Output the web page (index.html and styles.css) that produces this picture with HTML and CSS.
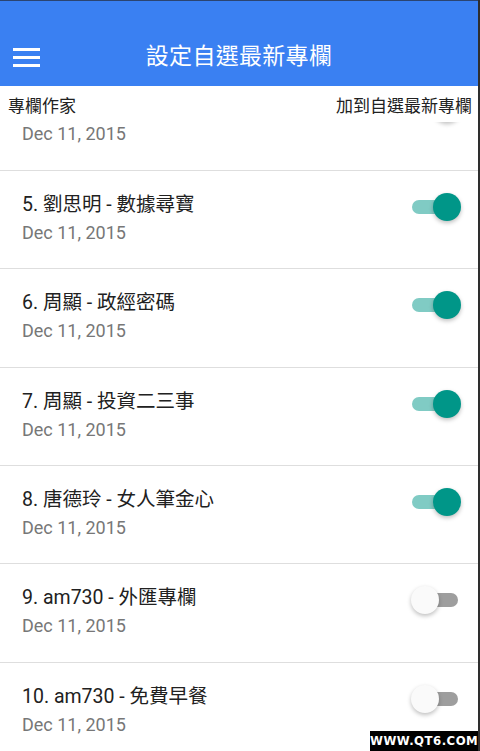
FILE: index.html
```html
<!DOCTYPE html>
<html>
<head>
  <meta charset="UTF-8">
  <meta name="viewport" content="width=device-width, initial-scale=1.0">
  <title>設定自選最新專欄</title>
  <link rel="stylesheet" href="styles.css">
</head>
<body>
  <div class="screen">
    <div class="appbar">
      <div class="menu">
        <span></span><span></span><span></span>
      </div>
      <h1>設定自選最新專欄</h1>
    </div>

    <div class="content">
      <div class="labels">
        <span>專欄作家</span>
        <span>加到自選最新專欄</span>
      </div>

      <div class="list">
        <!-- row 4 is scrolled up under the labels, only its date shows -->
        <div class="row">
          <div class="text">
            <div class="name-space"></div>
            <div class="date">Dec 11, 2015</div>
          </div>
          <div class="switch on"><div class="track"></div><div class="thumb"></div></div>
        </div>
        <div class="row">
          <div class="text">
            <div class="name">5. 劉思明 - 數據尋寶</div>
            <div class="date">Dec 11, 2015</div>
          </div>
          <div class="switch on"><div class="track"></div><div class="thumb"></div></div>
        </div>
        <div class="row">
          <div class="text">
            <div class="name">6. 周顯 - 政經密碼</div>
            <div class="date">Dec 11, 2015</div>
          </div>
          <div class="switch on"><div class="track"></div><div class="thumb"></div></div>
        </div>
        <div class="row">
          <div class="text">
            <div class="name">7. 周顯 - 投資二三事</div>
            <div class="date">Dec 11, 2015</div>
          </div>
          <div class="switch on"><div class="track"></div><div class="thumb"></div></div>
        </div>
        <div class="row">
          <div class="text">
            <div class="name">8. 唐德玲 - 女人筆金心</div>
            <div class="date">Dec 11, 2015</div>
          </div>
          <div class="switch on"><div class="track"></div><div class="thumb"></div></div>
        </div>
        <div class="row">
          <div class="text">
            <div class="name">9. am730 - 外匯專欄</div>
            <div class="date">Dec 11, 2015</div>
          </div>
          <div class="switch"><div class="track"></div><div class="thumb"></div></div>
        </div>
        <div class="row">
          <div class="text">
            <div class="name">10. am730 - 免費早餐</div>
            <div class="date">Dec 11, 2015</div>
          </div>
          <div class="switch"><div class="track"></div><div class="thumb"></div></div>
        </div>
      </div>
    </div>

    <div class="watermark">WWW.QT6.COM</div>
  </div>
</body>
</html>
```

FILE: styles.css
```css
html, body {
  margin: 0;
  padding: 0;
}
body {
  font-family: Roboto, "Noto Sans CJK TC", sans-serif;
  background: #fff;
  color: #212121;
}
.screen {
  position: relative;
  width: 478px;
  height: 751px;
  overflow: hidden;
  border-right: 2px solid #2e2e2e;
  display: flex;
  flex-direction: column;
}
.appbar {
  height: 85px;
  flex-shrink: 0;
  background: #3a80f2;
  border-top: 1px solid #2b4470;
  display: flex;
  align-items: center;
}
.menu {
  display: flex;
  flex-direction: column;
  gap: 5px;
  margin-left: 13px;
  margin-top: 27px;
}
.menu span {
  display: block;
  width: 27px;
  height: 3px;
  background: #fff;
}
.appbar h1 {
  flex: 1;
  margin: 21px 0 0 -40px;
  text-align: center;
  font-size: 23px;
  font-weight: normal;
  color: #fff;
  letter-spacing: 0.3px;
}
.content {
  position: relative;
  flex: 1;
  overflow: hidden;
}
.labels {
  position: absolute;
  top: 0;
  left: 0;
  right: 0;
  height: 36px;
  z-index: 2;
  background: #fff;
  display: flex;
  justify-content: space-between;
  align-items: center;
  padding: 0 6px 0 8px;
  font-size: 17px;
  color: #212121;
}
.list {
  margin-top: -13.6px;
}
.row {
  height: 97.4px;
  border-bottom: 1px solid #dedede;
  display: flex;
  justify-content: space-between;
  align-items: flex-start;
  padding: 0 17px 0 22px;
}
.text {
  padding-top: 20px;
}
.name {
  font-size: 19.5px;
  line-height: 28px;
  color: #212121;
}
.name-space {
  height: 28px;
}
.date {
  font-size: 18px;
  line-height: 28px;
  color: #777;
}
.switch {
  position: relative;
  width: 50px;
  height: 28px;
  margin-top: 22px;
}
.track {
  position: absolute;
  left: 1px;
  top: 7px;
  width: 46px;
  height: 14px;
  border-radius: 7px;
  background: #9e9e9e;
}
.thumb {
  position: absolute;
  left: 0;
  top: 0;
  width: 28px;
  height: 28px;
  border-radius: 50%;
  background: #fafafa;
  box-shadow: 0 2px 4px rgba(0, 0, 0, 0.25);
}
.switch.on .track {
  background: #80cbc4;
}
.switch.on .thumb {
  left: 22px;
  background: #009688;
}
.watermark {
  position: absolute;
  right: 0;
  bottom: 0;
  width: 108px;
  height: 20px;
  background: #000;
  color: #fff;
  font-family: "DejaVu Sans Condensed", "DejaVu Sans", sans-serif;
  font-weight: bold;
  font-size: 13px;
  line-height: 20px;
  text-align: center;
  letter-spacing: 0.5px;
  z-index: 3;
}
```
